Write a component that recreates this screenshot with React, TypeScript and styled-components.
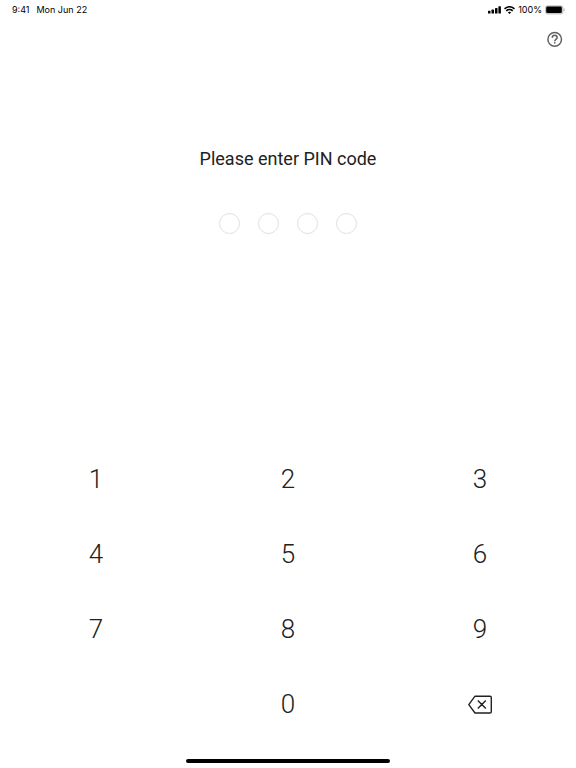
import React, { useState } from "react";
import styled, { createGlobalStyle } from "styled-components";

const GlobalStyle = createGlobalStyle`
  * { box-sizing: border-box; }
  body { margin: 0; background: #fff; color: #212121; font-family: Roboto, sans-serif; }
  button { border: 0; padding: 0; background: none; color: inherit; font: inherit; cursor: pointer; }
  svg { display: block; }
`;

const Screen = styled.main`
  display: flex;
  flex-direction: column;
  min-height: 100vh;
`;

const StatusBar = styled.header`
  display: flex;
  justify-content: space-between;
  align-items: center;
  height: 20px;
  padding: 0 11px 0 12px;
  color: #000;
  font: 9px/18px Inter, sans-serif;
`;

const StatusGroup = styled.div<{ $gap: number }>`
  display: flex;
  align-items: center;
  gap: ${(p) => p.$gap}px;
`;

const Toolbar = styled.div`
  display: flex;
  justify-content: flex-end;
  padding: 10px 12px 0;
`;

const HelpButton = styled.button`
  width: 18px;
  height: 18px;
`;

const Prompt = styled.section`
  display: flex;
  flex: 1;
  flex-direction: column;
  align-items: center;
  padding-top: 99px;
`;

const Title = styled.h1`
  margin: 0;
  font-size: 18px;
  font-weight: 400;
  line-height: 24px;
`;

const Dots = styled.div`
  display: flex;
  gap: 18px;
  margin-top: 42px;
`;

const Dot = styled.span<{ $filled: boolean }>`
  width: 21px;
  height: 21px;
  border: 1px solid #e0e0e0;
  border-radius: 50%;
  background: ${(p) => (p.$filled ? "#212121" : "#fff")};
`;

const Keypad = styled.div`
  display: grid;
  grid-template-columns: repeat(3, 1fr);
  grid-auto-rows: 75px;
`;

const Key = styled.button`
  display: flex;
  align-items: center;
  justify-content: center;
  font-size: 26px;
  font-weight: 300;
`;

const HomeArea = styled.footer`
  display: flex;
  justify-content: center;
  padding: 18px 0 5px;
`;

const HomeIndicator = styled.span`
  width: 35.5%;
  height: 4px;
  border-radius: 2px;
  background: #000;
`;

const SignalIcon = () => (
  <svg width="13" height="8" viewBox="0 0 13 8" aria-hidden="true">
    <rect x="0" y="4.8" width="2.5" height="2.8" rx=".6" />
    <rect x="3.5" y="3.6" width="2.5" height="4" rx=".6" />
    <rect x="7" y="2" width="2.5" height="5.6" rx=".6" />
    <rect x="10.4" y=".2" width="2.5" height="7.4" rx=".6" />
  </svg>
);

const WifiIcon = () => (
  <svg width="11" height="8" viewBox="0 0 11 8" fill="none" stroke="#000" strokeWidth="1.6" aria-hidden="true">
    <path d="M.5 2.8C3.3.1 7.7.1 10.5 2.8M2.3 4.9c1.8-1.7 4.6-1.7 6.4 0" />
    <path d="M3.8 6.3c.9-.9 2.5-.9 3.4 0L5.5 8z" fill="#000" stroke="none" />
  </svg>
);

const BatteryIcon = () => (
  <svg width="20" height="10" viewBox="0 0 20 10" aria-hidden="true">
    <rect x="0" y=".2" width="18.4" height="9.2" rx="2.6" fill="#c8c8c8" />
    <rect x="1.2" y="1.5" width="15.6" height="6.6" rx="1.4" />
    <path d="M18.8 3.3v3c1.2-.5 1.2-2.5 0-3z" fillOpacity=".4" />
  </svg>
);

const HelpIcon = () => (
  <svg width="18" height="18" viewBox="0 0 18 18" fill="none" stroke="#616161" strokeWidth="1.5" aria-hidden="true">
    <circle cx="8.7" cy="9.4" r="6.8" />
    <path d="M6.3 7.7c0-3.2 4.8-3.2 4.8 0 0 1.7-2.4 1.8-2.4 3.5" />
    <path d="M7.95 12.1h1.5v1.5h-1.5z" fill="#616161" stroke="none" />
  </svg>
);

const BackspaceIcon = () => (
  <svg width="24" height="20" viewBox="0 0 24 20" fill="none" stroke="#212121" strokeWidth="1.4" aria-hidden="true">
    <path d="M7 2.2h15q1.3 0 1.3 1.3v14.2q0 1.3-1.3 1.3H7L.8 10.6zM9.8 6.6l8 8M17.8 6.6l-8 8" strokeLinejoin="round" />
  </svg>
);

const PIN_LENGTH = 4;

export default function App() {
  const [pin, setPin] = useState("");
  const press = (digit: string) => setPin((value) => (value + digit).slice(0, PIN_LENGTH));

  return (
    <>
      <GlobalStyle />
      <Screen>
        <StatusBar>
          <StatusGroup $gap={7}><span>9:41</span><span>Mon Jun 22</span></StatusGroup>
          <StatusGroup $gap={3}><SignalIcon /><WifiIcon /><span>100%</span><BatteryIcon /></StatusGroup>
        </StatusBar>
        <Toolbar>
          <HelpButton aria-label="Help"><HelpIcon /></HelpButton>
        </Toolbar>
        <Prompt>
          <Title>Please enter PIN code</Title>
          <Dots role="status" aria-label="PIN digits">
            {Array.from({ length: PIN_LENGTH }, (_, i) => <Dot key={i} $filled={i < pin.length} />)}
          </Dots>
        </Prompt>
        <Keypad>
          {["1", "2", "3", "4", "5", "6", "7", "8", "9"].map((digit) => (
            <Key key={digit} onClick={() => press(digit)}>{digit}</Key>
          ))}
          <span />
          <Key onClick={() => press("0")}>0</Key>
          <Key aria-label="Delete" onClick={() => setPin((value) => value.slice(0, -1))}><BackspaceIcon /></Key>
        </Keypad>
        <HomeArea><HomeIndicator /></HomeArea>
      </Screen>
    </>
  );
}
